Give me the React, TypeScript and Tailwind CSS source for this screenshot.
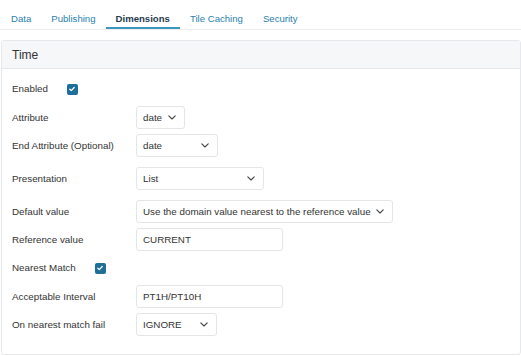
import React from "react";

const Chevron = () => (
  <svg width="8" height="5" viewBox="0 0 8 5" fill="none" className="shrink-0">
    <path d="M0.8 0.8 L4 4 L7.2 0.8" stroke="#444" strokeWidth="1.1" strokeLinecap="round" strokeLinejoin="round" />
  </svg>
);

const Check = () => (
  <span className="flex h-[11px] w-[11px] items-center justify-center rounded-[2px] bg-[#1d6e99]">
    <svg width="8" height="8" viewBox="0 0 8 8" fill="none">
      <path d="M1.8 4.2 L3.3 5.6 L6.2 2.5" stroke="#fff" strokeWidth="1.3" strokeLinecap="round" strokeLinejoin="round" />
    </svg>
  </span>
);

const Select = ({ value, w }: { value: string; w: string }) => (
  <div className={`flex h-[23px] items-center justify-between whitespace-nowrap rounded-[3px] border border-[#e3e5e8] bg-white pl-[6px] pr-[8px] ${w}`}>
    <span>{value}</span>
    <Chevron />
  </div>
);

const Input = ({ value }: { value: string }) => (
  <div className="flex h-[23px] w-[147px] items-center rounded-[3px] border border-[#e3e5e8] bg-white pl-[6px]">
    {value}
  </div>
);

const Row = ({ label, mt, children }: { label: string; mt: string; children: React.ReactNode }) => (
  <div className={`flex h-[23px] items-center ${mt}`}>
    <div className="w-[134px] shrink-0 whitespace-nowrap pl-[10px]">{label}</div>
    {children}
  </div>
);

export default function App() {
  const tabs = ["Data", "Publishing", "Dimensions", "Tile Caching", "Security"];
  return (
    <div
      className="h-[356px] w-[521px] overflow-hidden bg-white text-[9.8px] leading-[14px] text-[#333]"
      style={{ fontFamily: '"Liberation Sans", Arial, sans-serif' }}
    >
      <div className="flex h-[30px] border-b border-[#eceef0] pl-[1px] text-[9.6px]">
        {tabs.map((t) => (
          <div
            key={t}
            className={
              t === "Dimensions"
                ? "flex items-center border-b-2 border-[#3a97bf] px-[10px] pt-[10px] font-bold text-[#1f3b4f]"
                : "flex items-center border-b-2 border-transparent px-[10px] pt-[10px] text-[#2a7fae]"
            }
          >
            {t}
          </div>
        ))}
      </div>
      <div className="ml-[1px] mt-[10px] h-[315px] rounded-[3px] border border-[#e6e8eb]">
        <div className="flex h-[28px] items-center border-b border-[#e6e8eb] bg-[#f6f7f9] pl-[10px] text-[12px] text-[#333]">
          Time
        </div>
        <div className="flex flex-col">
          <div className="mt-[14px] flex h-[12px] items-center pl-[10px]">
            <span className="mr-[19px]">Enabled</span>
            <Check />
          </div>
          <Row label="Attribute" mt="mt-[11px]">
            <Select value="date" w="w-[49px]" />
          </Row>
          <Row label="End Attribute (Optional)" mt="mt-[5px]">
            <Select value="date" w="w-[82px]" />
          </Row>
          <Row label="Presentation" mt="mt-[10px]">
            <Select value="List" w="w-[128px]" />
          </Row>
          <Row label="Default value" mt="mt-[10px]">
            <Select value="Use the domain value nearest to the reference value" w="w-[257px]" />
          </Row>
          <Row label="Reference value" mt="mt-[5px]">
            <Input value="CURRENT" />
          </Row>
          <div className="mt-[11px] flex h-[12px] items-center pl-[10px]">
            <span className="mr-[19px]">Nearest Match</span>
            <Check />
          </div>
          <Row label="Acceptable Interval" mt="mt-[11px]">
            <Input value="PT1H/PT10H" />
          </Row>
          <Row label="On nearest match fail" mt="mt-[5px]">
            <Select value="IGNORE" w="w-[81px]" />
          </Row>
        </div>
      </div>
    </div>
  );
}
